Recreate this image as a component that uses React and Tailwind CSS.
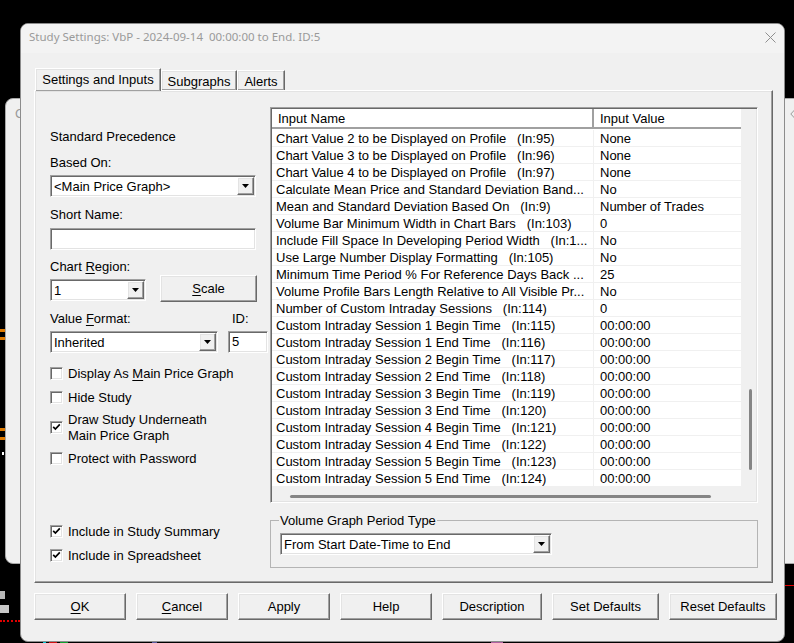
import React from "react";

const ROWS = [
  ["Chart Value 2 to be Displayed on Profile   (In:95)", "None"],
  ["Chart Value 3 to be Displayed on Profile   (In:96)", "None"],
  ["Chart Value 4 to be Displayed on Profile   (In:97)", "None"],
  ["Calculate Mean Price and Standard Deviation Band...", "No"],
  ["Mean and Standard Deviation Based On   (In:9)", "Number of Trades"],
  ["Volume Bar Minimum Width in Chart Bars   (In:103)", "0"],
  ["Include Fill Space In Developing Period Width   (In:1...", "No"],
  ["Use Large Number Display Formatting   (In:105)", "No"],
  ["Minimum Time Period % For Reference Days Back ...", "25"],
  ["Volume Profile Bars Length Relative to All Visible Pr...", "No"],
  ["Number of Custom Intraday Sessions   (In:114)", "0"],
  ["Custom Intraday Session 1 Begin Time   (In:115)", "00:00:00"],
  ["Custom Intraday Session 1 End Time   (In:116)", "00:00:00"],
  ["Custom Intraday Session 2 Begin Time   (In:117)", "00:00:00"],
  ["Custom Intraday Session 2 End Time   (In:118)", "00:00:00"],
  ["Custom Intraday Session 3 Begin Time   (In:119)", "00:00:00"],
  ["Custom Intraday Session 3 End Time   (In:120)", "00:00:00"],
  ["Custom Intraday Session 4 Begin Time   (In:121)", "00:00:00"],
  ["Custom Intraday Session 4 End Time   (In:122)", "00:00:00"],
  ["Custom Intraday Session 5 Begin Time   (In:123)", "00:00:00"],
  ["Custom Intraday Session 5 End Time   (In:124)", "00:00:00"],
];

const BUTTONS = [
  ["OK", "w-[92px]", 0],
  ["Cancel", "w-[92px]", 0],
  ["Apply", "w-[92px]", -1],
  ["Help", "w-[92px]", -1],
  ["Description", "w-[100px]", -1],
  ["Set Defaults", "w-[107px]", -1],
  ["Reset Defaults", "w-[108px]", -1],
];

const sunken =
  "border border-t-[#a0a0a0] border-l-[#a0a0a0] border-r-white border-b-white shadow-[inset_1px_1px_0_#696969,inset_-1px_-1px_0_#e3e3e3]";
const raised =
  "border border-t-white border-l-white border-r-[#696969] border-b-[#696969] shadow-[inset_-1px_-1px_0_#a0a0a0,inset_1px_1px_0_#e3e3e3]";

// windows accelerator: one letter underlined
const Accel = ({ text, at }) => {
  if (at < 0) return text;
  return (
    <>
      {text.slice(0, at)}
      <span className="underline underline-offset-2">{text[at]}</span>
      {text.slice(at + 1)}
    </>
  );
};

const Arrow = () => (
  <svg width="7" height="4" viewBox="0 0 7 4">
    <polygon points="0,0 7,0 3.5,4" fill="#000" />
  </svg>
);

const Label = ({ className = "", children }) => (
  <div className={`h-[17px] pt-px leading-[16px] ${className}`}>{children}</div>
);

function Combo({ value, className = "" }) {
  return (
    <div className={`flex h-[22px] p-px bg-white ${sunken} ${className}`}>
      <div className="flex-1 pl-[2px] leading-[20px] whitespace-nowrap overflow-hidden">{value}</div>
      <div className={`w-[17px] flex items-center justify-center bg-[#f0f0f0] ${raised}`}>
        <Arrow />
      </div>
    </div>
  );
}

function Check({ checked, children }) {
  return (
    <div className="flex items-center gap-[5px]">
      <div className={`w-[13px] h-[13px] bg-white flex items-center justify-center shrink-0 ${sunken}`}>
        {checked && (
          <svg width="9" height="8" viewBox="0 0 9 8">
            <path d="M1.2 3.8 L3.4 6 L7.8 1.4" stroke="#000" strokeWidth="1.7" fill="none" />
          </svg>
        )}
      </div>
      <div className="pt-[2px] leading-[16px]">{children}</div>
    </div>
  );
}

function LeftColumn() {
  return (
    <div className="w-[233px] shrink-0 pl-[15px] pt-[37px] flex flex-col">
      <Label>Standard Precedence</Label>
      <Label className="mt-[9px]">Based On:</Label>
      <Combo value="<Main Price Graph>" className="mt-[4px] w-[206px]" />
      <Label className="mt-[9px]">Short Name:</Label>
      <div className={`mt-[5px] w-[206px] h-[22px] bg-white ${sunken}`} />
      <Label className="mt-[8px]">
        <Accel text="Chart Region:" at={6} />
      </Label>
      <div className="flex h-[27px]">
        <Combo value="1" className="mt-[4px] w-[96px]" />
        <button className={`ml-[14px] w-[97px] h-[27px] bg-[#f0f0f0] ${raised}`}>
          <Accel text="Scale" at={0} />
        </button>
      </div>
      <div className="mt-[8px] flex">
        <Label className="w-[182px]">
          <Accel text="Value Format:" at={6} />
        </Label>
        <Label>ID:</Label>
      </div>
      <div className="mt-[4px] flex">
        <Combo value="Inherited" className="w-[168px]" />
        <div className={`ml-[10px] w-[40px] h-[22px] bg-white pl-[3px] leading-[20px] ${sunken}`}>5</div>
      </div>
      <div className="mt-[11px]">
        <Check>
          Display As <Accel text="Main Price Graph" at={0} />
        </Check>
      </div>
      <div className="mt-[6px]">
        <Check>Hide Study</Check>
      </div>
      <div className="mt-[4px]">
        <Check checked>
          Draw Study Underneath
          <br />
          Main Price Graph
        </Check>
      </div>
      <div className="mt-[5px]">
        <Check>Protect with Password</Check>
      </div>
      <div className="mt-[55px]">
        <Check checked>Include in Study Summary</Check>
      </div>
      <div className="mt-[6px]">
        <Check checked>Include in Spreadsheet</Check>
      </div>
    </div>
  );
}

function InputsTable() {
  return (
    <div className={`h-[396px] p-px bg-[#f0f0f0] flex flex-col ${sunken}`}>
      <div className="flex h-[20px] shrink-0">
        <div className="w-[322px] h-full bg-white border-b-2 border-r-2 border-[#a0a0a0] pl-[6px] pt-px leading-[17px]">
          Input Name
        </div>
        <div className="w-[147px] h-full bg-white border-b-2 border-[#a0a0a0] pl-[6px] pt-px leading-[17px]">
          Input Value
        </div>
        <div className="flex-1" />
      </div>
      <div className="flex flex-1">
        <div className="w-[469px] bg-white pt-px">
          {ROWS.map(([name, value]) => (
            <div key={name} className="flex h-[17px] border-b border-[#f0f0f0]">
              <div className="w-[322px] pl-[4px] pt-px border-r border-[#f0f0f0] whitespace-pre overflow-hidden leading-[15px]">
                {name}
              </div>
              <div className="flex-1 pl-[6px] pt-px whitespace-nowrap leading-[15px]">{value}</div>
            </div>
          ))}
        </div>
        <div className="flex-1 pl-[8px] pt-[260px]">
          <div className="w-[3px] h-[81px] rounded-full bg-[#858585]" />
        </div>
      </div>
      <div className="h-[15px] shrink-0 pl-[18px] pt-[8px]">
        <div className="w-[421px] h-[3px] rounded-full bg-[#858585]" />
      </div>
    </div>
  );
}

function PeriodGroup() {
  return (
    <fieldset className="mt-[9px] h-[56px] border border-[#b4b4b4] pl-[9px]">
      <legend className="-ml-px px-px pt-px leading-[15px]">Volume Graph Period Type</legend>
      <Combo value="From Start Date-Time to End" className="mt-[5px] w-[272px]" />
    </fieldset>
  );
}

function Backdrop() {
  return (
    <>
      {/* window behind the dialog */}
      <div className="absolute left-[5px] top-[98px] w-[820px] h-[466px] rounded-lg bg-[#f0f0f0] border border-[#a8a8a8]">
        <div className="absolute left-[9px] top-[5px] text-[13px] text-[#9a9a9a]">C</div>
        <svg className="absolute left-[784px] top-[10px]" width="6" height="10" viewBox="0 0 6 10">
          <path d="M5 0.5 L0.8 5 L5 9.5" stroke="#9a9a9a" strokeWidth="1" fill="none" />
        </svg>
      </div>
      {/* chart fragments around the windows */}
      <div className="absolute left-0 top-[329px] w-[5px] h-[3px] bg-[#e07b00]" />
      <div className="absolute left-0 top-[337px] w-[5px] h-[3px] bg-[#e07b00]" />
      <div className="absolute left-0 top-[428px] w-[5px] h-[3px] bg-[#e07b00]" />
      <div className="absolute left-0 top-[437px] w-[5px] h-[3px] bg-[#e07b00]" />
      <div className="absolute left-[2px] top-[452px] w-[2px] h-[3px] bg-white" />
      <div className="absolute left-0 top-[591px] w-[5px] h-[8px] bg-[#b8b8b8]" />
      <div className="absolute left-0 top-[605px] w-[9px] h-[8px] bg-[#c8c8c8]" />
      <div className="absolute left-0 top-[620px] w-[20px] border-t-2 border-dotted border-[#e00000]" />
      <div className="absolute left-[785px] top-[585px] w-[9px] h-[1px] bg-[#e00000]" />
      <div className="absolute left-[43px] top-[640px] w-[3px] h-[3px] bg-[#00c8d8]" />
      <div className="absolute left-[49px] top-[640px] w-[8px] h-[3px] bg-[#d01010]" />
      <div className="absolute left-[60px] top-[640px] w-[8px] h-[3px] bg-[#10a030]" />
      <div className="absolute left-[152px] top-[640px] w-[5px] h-[3px] bg-[#5a5aa0]" />
      <div className="absolute left-[491px] top-[640px] w-[12px] h-[3px] bg-[#b060a0]" />
    </>
  );
}

export default function App() {
  return (
    <div className="relative w-[794px] h-[643px] bg-black overflow-hidden text-[13px] text-black font-['Liberation_Sans',Arial,sans-serif]">
      <Backdrop />
      <div className="absolute left-[20px] top-[23px] w-[765px] h-[619px] rounded-lg border border-[#8c8c8c] bg-[#f0f0f0] overflow-hidden flex flex-col">
        <div className="h-[29px] shrink-0 bg-[#f3f3f3] flex items-center pl-[8px] pr-[8px] pb-[3px]">
          <div className="flex-1 text-[11.5px] text-[#9a9a9a] whitespace-pre font-['Noto_Sans',sans-serif]">
            Study Settings: VbP - 2024-09-14  00:00:00 to End. ID:5
          </div>
          <svg width="11" height="11" viewBox="0 0 11 11">
            <path d="M0.5 0.5 L10.5 10.5 M10.5 0.5 L0.5 10.5" stroke="#8f8f8f" strokeWidth="1" />
          </svg>
        </div>

        <div className="px-[13px] mt-[15px] flex flex-col">
          <div className="flex items-end h-[22px]">
            <div className={`relative z-10 -mb-px w-[126px] h-[23px] ml-px pt-[3px] text-center leading-[16px] bg-[#f0f0f0] border-b-0 ${raised}`}>
              Settings and Inputs
            </div>
            <div className={`w-[76px] h-[20px] pt-[3px] text-center leading-[15px] bg-[#f0f0f0] border-b-0 ${raised}`}>
              Subgraphs
            </div>
            <div className={`w-[48px] h-[20px] pt-[3px] text-center leading-[15px] bg-[#f0f0f0] border-b-0 ${raised}`}>
              Alerts
            </div>
          </div>

          <div className={`w-[739px] h-[493px] flex ${raised}`}>
            <LeftColumn />
            <div className="ml-[2px] w-[488px] pt-[16px] flex flex-col">
              <InputsTable />
              <PeriodGroup />
            </div>
          </div>

          <div className="mt-[10px] flex gap-[10px]">
            {BUTTONS.map(([label, w, at]) => (
              <button key={label} className={`${w} shrink-0 h-[27px] bg-[#f0f0f0] ${raised}`}>
                <Accel text={label} at={at} />
              </button>
            ))}
          </div>
        </div>
      </div>
    </div>
  );
}
